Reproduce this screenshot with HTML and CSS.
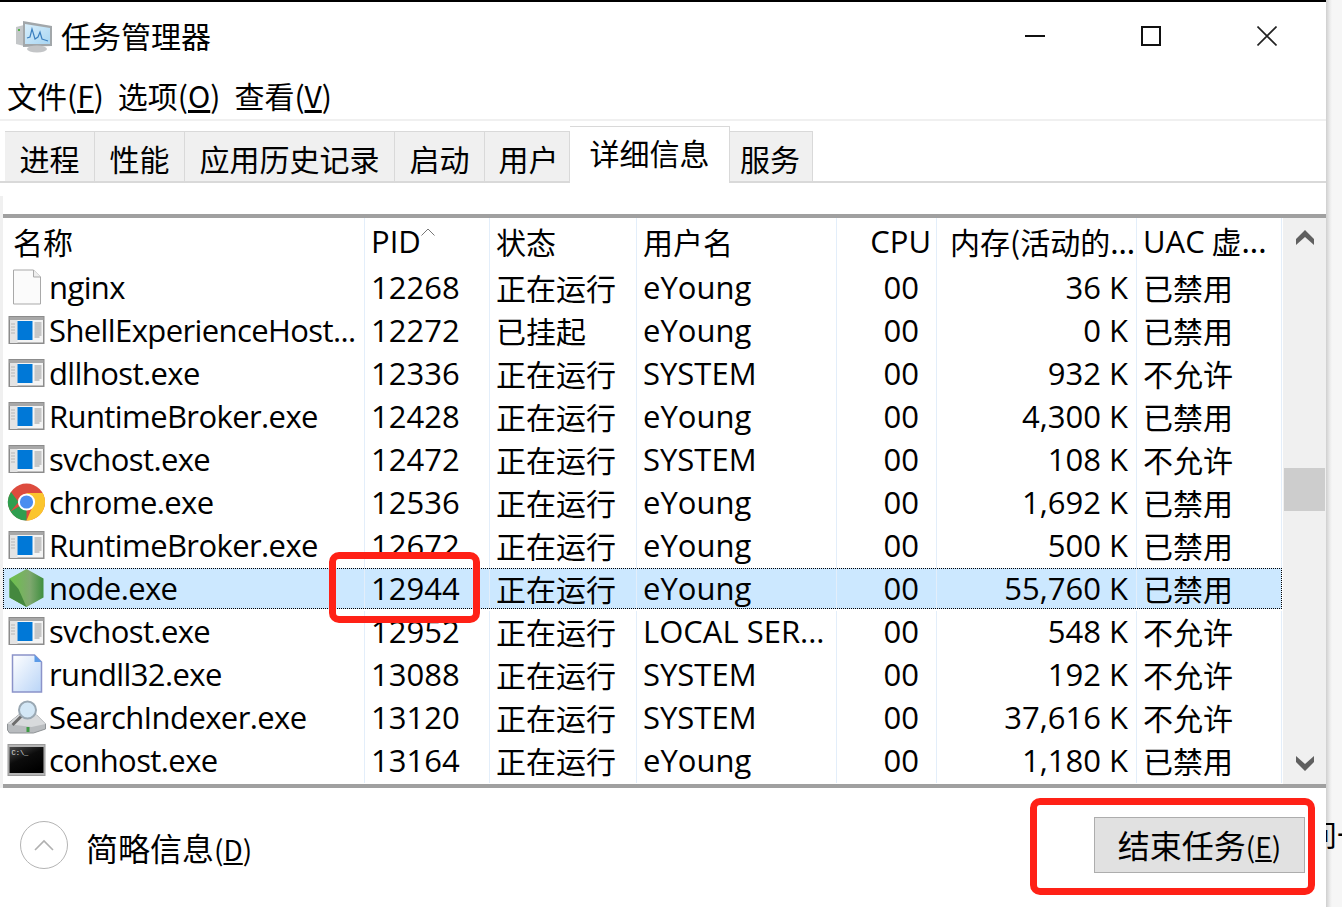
FILE: index.html
```html
<!DOCTYPE html>
<html lang="zh-CN">
<head>
    <meta charset="UTF-8">
    <title>任务管理器</title>
    <link rel="stylesheet" href="styles.css">
</head>
<body>
<svg class="defs" width="0" height="0">
    <symbol id="ico-app" viewBox="0 0 36 28">
        <rect x="0.75" y="0.75" width="34.5" height="26.5" fill="#f4f4f4" stroke="#8c8c8c" stroke-width="1.5"/>
        <rect x="1" y="1" width="34" height="3" fill="#a8a8a8"/>
        <rect x="1.5" y="4" width="7.5" height="23" fill="#e4e4e4"/>
        <path d="M3 8h4M3 11h4M3 14h4M3 17h4" stroke="#888" stroke-width="1" stroke-dasharray="1 1"/>
        <rect x="9" y="5" width="15" height="19" fill="#0078d7"/>
        <path d="M26 7h7M26 9h7M26 11h7M26 13h7M26 15h7M26 17h7M26 19h7M26 21h5" stroke="#999" stroke-width="1"/>
    </symbol>
</svg>

<div class="window">
    <div class="titlebar">
        <svg class="title-icon" width="38" height="34" viewBox="0 0 38 34">
            <defs><linearGradient id="screen-g" x1="0" y1="0" x2="1" y2="1"><stop offset="0" stop-color="#d8eefb"/><stop offset="1" stop-color="#a9d6f2"/></linearGradient></defs>
            <path d="M1 8l8-2v21l-8-2z" fill="#c4c7c9"/>
            <path d="M8 2l29 5v20L8 28z" fill="#a2a7aa"/>
            <path d="M10 5l25 4v16L10 25z" fill="url(#screen-g)"/>
            <path d="M12 19l3-1 2-8 3 10 3-2 2-5 2 7 3 1 3 1" fill="none" stroke="#3b7fbf" stroke-width="1.2"/>
            <ellipse cx="22" cy="30" rx="10" ry="3.5" fill="#c3c5c7"/>
            <rect x="3" y="10" width="2" height="2" fill="#55b04a"/>
        </svg>
        <span class="title-text">任务管理器</span>
        <div class="win-buttons">
            <svg width="20" height="20" viewBox="0 0 20 20"><path d="M0 10h20" stroke="#111" stroke-width="2"/></svg>
            <svg width="20" height="20" viewBox="0 0 20 20"><rect x="1" y="1" width="18" height="18" fill="none" stroke="#111" stroke-width="2"/></svg>
            <svg width="20" height="20" viewBox="0 0 20 20"><path d="M0.5 0.5l19 19M19.5 0.5l-19 19" stroke="#222" stroke-width="1.6"/></svg>
        </div>
    </div>

    <div class="menubar">
        <span>文件(<u>F</u>)</span>
        <span>选项(<u>O</u>)</span>
        <span>查看(<u>V</u>)</span>
    </div>

    <div class="tabs">
        <div class="tab tab-a">进程</div>
        <div class="tab tab-a">性能</div>
        <div class="tab tab-b">应用历史记录</div>
        <div class="tab tab-a">启动</div>
        <div class="tab tab-c">用户</div>
        <div class="tab tab-active">详细信息</div>
        <div class="tab tab-d">服务</div>
    </div>

    <div class="content">
        <div class="list-gap"></div>
        <div class="list">
            <div class="rows">
                <div class="row header">
                    <div class="cell first">名称</div>
                    <div class="cell"><span class="en">PID</span><svg class="sort" width="14" height="8" viewBox="0 0 14 8"><path d="M0.5 7.5L7 1l6.5 6.5" fill="none" stroke="#777" stroke-width="1"/></svg></div>
                    <div class="cell">状态</div>
                    <div class="cell">用户名</div>
                    <div class="cell right en cpu-head">CPU</div>
                    <div class="cell mem-head">内存(活动的...</div>
                    <div class="cell"><span><span class="en">UAC</span> 虚...</span></div>
                </div>

                <div class="row">
                    <div class="cell name">
                        <svg class="ico" width="36" height="36" viewBox="0 0 36 36"><path d="M5 1h20l7 7v27H5z" fill="#fbfbfb" stroke="#a9a9a9"/><path d="M25 1v7h7" fill="#eee" stroke="#a9a9a9"/></svg>
                        <span class="en">nginx</span>
                    </div>
                    <div class="cell en">12268</div><div class="cell">正在运行</div><div class="cell en">eYoung</div><div class="cell en cpu">00</div><div class="cell en right">36 K</div><div class="cell">已禁用</div>
                </div>
                <div class="row">
                    <div class="cell name"><svg class="ico" width="36" height="28"><use href="#ico-app"/></svg><span class="en">ShellExperienceHost...</span></div>
                    <div class="cell en">12272</div><div class="cell">已挂起</div><div class="cell en">eYoung</div><div class="cell en cpu">00</div><div class="cell en right">0 K</div><div class="cell">已禁用</div>
                </div>
                <div class="row">
                    <div class="cell name"><svg class="ico" width="36" height="28"><use href="#ico-app"/></svg><span class="en">dllhost.exe</span></div>
                    <div class="cell en">12336</div><div class="cell">正在运行</div><div class="cell en">SYSTEM</div><div class="cell en cpu">00</div><div class="cell en right">932 K</div><div class="cell">不允许</div>
                </div>
                <div class="row">
                    <div class="cell name"><svg class="ico" width="36" height="28"><use href="#ico-app"/></svg><span class="en">RuntimeBroker.exe</span></div>
                    <div class="cell en">12428</div><div class="cell">正在运行</div><div class="cell en">eYoung</div><div class="cell en cpu">00</div><div class="cell en right">4,300 K</div><div class="cell">已禁用</div>
                </div>
                <div class="row">
                    <div class="cell name"><svg class="ico" width="36" height="28"><use href="#ico-app"/></svg><span class="en">svchost.exe</span></div>
                    <div class="cell en">12472</div><div class="cell">正在运行</div><div class="cell en">SYSTEM</div><div class="cell en cpu">00</div><div class="cell en right">108 K</div><div class="cell">不允许</div>
                </div>
                <div class="row">
                    <div class="cell name">
                        <svg class="ico" width="38" height="38" viewBox="0 0 38 38">
                            <circle cx="19" cy="19" r="18.5" fill="#dd4b3e"/>
                            <path d="M19 19L3 28.5A18.5 18.5 0 0 0 19 37.5z" fill="#2f9e4f"/>
                            <path d="M3 28.5A18.5 18.5 0 0 1 3.5 9L11 19z" fill="#2f9e4f"/>
                            <path d="M19 10h16.2A18.5 18.5 0 0 1 19 37.5L27 19z" fill="#fbc52d"/>
                            <circle cx="19" cy="19" r="8.6" fill="#fff"/>
                            <circle cx="19" cy="19" r="6.6" fill="#4a8df0"/>
                        </svg>
                        <span class="en">chrome.exe</span>
                    </div>
                    <div class="cell en">12536</div><div class="cell">正在运行</div><div class="cell en">eYoung</div><div class="cell en cpu">00</div><div class="cell en right">1,692 K</div><div class="cell">已禁用</div>
                </div>
                <div class="row">
                    <div class="cell name"><svg class="ico" width="36" height="28"><use href="#ico-app"/></svg><span class="en">RuntimeBroker.exe</span></div>
                    <div class="cell en">12672</div><div class="cell">正在运行</div><div class="cell en">eYoung</div><div class="cell en cpu">00</div><div class="cell en right">500 K</div><div class="cell">已禁用</div>
                </div>
                <div class="row selected">
                    <div class="cell name">
                        <svg class="ico" width="36" height="38" viewBox="0 0 36 38">
                            <defs><linearGradient id="node-g" x1="0" x2="1"><stop offset="0" stop-color="#6cc24a"/><stop offset="0.6" stop-color="#7fa86f"/><stop offset="1" stop-color="#3f8f3f"/></linearGradient></defs>
                            <path d="M18 0l17 9.5v19L18 38 1 28.5v-19z" fill="url(#node-g)"/>
                            <path d="M1 28.5v-19L10 20 18 38z" fill="#44883e"/>
                        </svg>
                        <span class="en">node.exe</span>
                    </div>
                    <div class="cell en">12944</div><div class="cell">正在运行</div><div class="cell en">eYoung</div><div class="cell en cpu">00</div><div class="cell en right">55,760 K</div><div class="cell">已禁用</div>
                </div>
                <div class="row">
                    <div class="cell name"><svg class="ico" width="36" height="28"><use href="#ico-app"/></svg><span class="en">svchost.exe</span></div>
                    <div class="cell en">12952</div><div class="cell">正在运行</div><div class="cell en">LOCAL SER...</div><div class="cell en cpu">00</div><div class="cell en right">548 K</div><div class="cell">不允许</div>
                </div>
                <div class="row">
                    <div class="cell name">
                        <svg class="ico" width="36" height="40" viewBox="0 0 36 40">
                            <defs><linearGradient id="doc-g" x1="0" y1="0" x2="1" y2="1"><stop offset="0" stop-color="#ffffff"/><stop offset="1" stop-color="#b9d4f7"/></linearGradient></defs>
                            <path d="M4 1h22l7 7v30H4z" fill="url(#doc-g)" stroke="#8b93c9" stroke-width="1.5"/>
                            <path d="M26 1v7h7z" fill="#5b9be8"/>
                        </svg>
                        <span class="en">rundll32.exe</span>
                    </div>
                    <div class="cell en">13088</div><div class="cell">正在运行</div><div class="cell en">SYSTEM</div><div class="cell en cpu">00</div><div class="cell en right">192 K</div><div class="cell">不允许</div>
                </div>
                <div class="row">
                    <div class="cell name">
                        <svg class="ico" width="40" height="34" viewBox="0 0 40 34">
                            <path d="M1 24L12 15h18l9 9v5l-12 4H3l-2-3z" fill="#b9bcbf" stroke="#8f9396"/>
                            <path d="M1 24l24 3 14-3-9-9H12z" fill="#d8dadc"/>
                            <rect x="20" y="27" width="3" height="5" fill="#3f9a45"/>
                            <path d="M15 16L6 25" stroke="#6d6d6d" stroke-width="3"/>
                            <circle cx="21" cy="10" r="8.5" fill="#d3e7f6" stroke="#9aa8b3" stroke-width="2"/>
                        </svg>
                        <span class="en">SearchIndexer.exe</span>
                    </div>
                    <div class="cell en">13120</div><div class="cell">正在运行</div><div class="cell en">SYSTEM</div><div class="cell en cpu">00</div><div class="cell en right">37,616 K</div><div class="cell">不允许</div>
                </div>
                <div class="row">
                    <div class="cell name">
                        <svg class="ico" width="38" height="32" viewBox="0 0 38 32">
                            <defs><linearGradient id="con-g" x1="0" y1="0" x2="0.6" y2="1"><stop offset="0" stop-color="#4a4a4a"/><stop offset="0.5" stop-color="#0c0c0c"/><stop offset="1" stop-color="#000"/></linearGradient></defs>
                            <rect x="0.5" y="0.5" width="37" height="31" fill="#b5b5b5" stroke="#999"/>
                            <rect x="2" y="3" width="34" height="26" fill="url(#con-g)"/>
                            <text x="4" y="11" class="con-text">C:\_</text>
                        </svg>
                        <span class="en">conhost.exe</span>
                    </div>
                    <div class="cell en">13164</div><div class="cell">正在运行</div><div class="cell en">eYoung</div><div class="cell en cpu">00</div><div class="cell en right">1,180 K</div><div class="cell">已禁用</div>
                </div>
            </div>

            <div class="scrollbar">
                <svg width="20" height="18" viewBox="0 0 20 18"><path d="M1 16V10L10 1l9 9v6l-9-8z" fill="#606060"/></svg>
                <div class="thumb"></div>
                <svg width="20" height="18" viewBox="0 0 20 18"><path d="M1 2v6l9 9 9-9V2l-9 8z" fill="#606060"/></svg>
            </div>
        </div>

        <div class="footer">
            <div class="less">
                <div class="less-btn">
                    <svg width="20" height="12" viewBox="0 0 20 12"><path d="M1 11l9-9 9 9" fill="none" stroke="#b0b0b0" stroke-width="1.6"/></svg>
                </div>
                <span class="less-text">简略信息<small>(<u>D</u>)</small></span>
            </div>
            <div class="end-task">结束任务<small>(<u>E</u>)</small></div>
        </div>
    </div>
</div>

<div class="behind"><div class="behind-text">问一</div></div>

<div class="mark mark-pid"></div>
<div class="mark mark-end"></div>
</body>
</html>
```

FILE: styles.css
```css
* {
    box-sizing: border-box;
}

html, body {
    margin: 0;
    height: 907px;
    overflow: hidden;
}

body {
    display: flex;
    background-color: #fff;
    font-family: "Noto Sans CJK SC", sans-serif;
    font-size: 30px;
    color: #000;
}

.defs {
    position: absolute;
}

.en {
    font-family: "Open Sans", "Noto Sans CJK SC", sans-serif;
    font-size: 31px;
}

.window {
    width: 1326px;
    height: 907px;
    flex: none;
    background-color: #fff;
    border-top: 2px solid #000;
    display: flex;
    flex-direction: column;
}

.behind {
    flex: 1;
    background: linear-gradient(to right, #cfcfcf, #ececec 4px, #f6f6f6 6px);
    overflow: hidden;
    padding-top: 813px;
    white-space: nowrap;
}

.behind-text {
    margin-left: -19px;
    font-size: 30px;
    line-height: 40px;
}

/* title bar */
.titlebar {
    height: 68px;
    display: flex;
    align-items: center;
    padding-left: 15px;
}

.title-text {
    margin: -2px 0 0 8px;
}

.win-buttons {
    margin-left: auto;
    width: 301px;
    padding-right: 49px;
    display: flex;
    justify-content: space-between;
}

/* menu */
.menubar {
    height: 51px;
    padding: 2px 0 0 7px;
    display: flex;
    gap: 14px;
    border-bottom: 2px solid #f0f0f0;
    line-height: 47px;
    white-space: nowrap;
}

/* tabs */
.tabs {
    height: 62px;
    padding: 8px 0 0 5px;
    display: flex;
    align-items: flex-end;
    border-bottom: 2px solid #d9d9d9;
}

.tab {
    height: 50px;
    background-color: #f0f0f0;
    border: 1px solid #d9d9d9;
    border-bottom: none;
    border-left: none;
    line-height: 53px;
    text-align: center;
    white-space: nowrap;
}

.tab-a { width: 90px; }
.tab-b { width: 210px; }
.tab-c { width: 85px; padding-left: 3px; }
.tab-d { width: 83px; padding-right: 2px; }

.tab-active {
    width: 160px;
    height: 57px;
    margin-bottom: -2px;
    background-color: #fff;
    border-top: 1px solid #d9d9d9;
    line-height: 50px;
    position: relative;
}

/* list */
.content {
    flex: 1;
    padding-top: 13px;
    display: flex;
    flex-direction: column;
}

.list-gap {
    height: 18px;
    flex: none;
    border-left: 3px solid #f0f0f0;
}

.list {
    height: 574px;
    flex: none;
    margin-left: 3px;
    box-shadow: -3px 0 0 #f0f0f0;
    border-top: 4px solid #a0a0a0;
    border-bottom: 4px solid #a0a0a0;
    display: flex;
}

.rows {
    width: 1280px;
    flex: none;
}

.row {
    display: grid;
    grid-template-columns: 362px 125px 147px 200px 100px 200px 145px;
    height: 43px;
    width: 1279px;
}

.row.header {
    height: 49px;
}

.cell {
    padding: 0 6px 4px;
    border-right: 1px solid #e3eefa;
    line-height: 36px;
    white-space: nowrap;
    display: flex;
    align-items: center;
}

.cell.first {
    padding-left: 10px;
}

.cell.right {
    justify-content: flex-end;
    padding-right: 8px;
}

.cell.cpu {
    justify-content: flex-end;
    padding-right: 17px;
}

.cell.cpu-head {
    padding-right: 5px;
}

.cell.mem-head {
    padding-left: 13px;
}

.cell.name {
    padding: 0 0 4px;
}

.name .en {
    letter-spacing: -0.6px;
}

.ico {
    width: 46px;
    flex: none;
    padding: 0 0 0 1px;
}

.con-text {
    font-family: "Liberation Mono", monospace;
    font-size: 7px;
    fill: #e0e0e0;
}

.sort {
    margin-top: -18px;
}

.row.selected {
    height: 41px;
    margin-bottom: 2px;
    background-color: #cce8ff;
    outline: 1px dotted #000;
    outline-offset: -1px;
}

.selected .cell {
    padding-bottom: 2px;
}

.scrollbar {
    flex: 1;
    background-color: #f0f0f0;
    display: flex;
    flex-direction: column;
    align-items: center;
    padding: 11px 0 12px;
}

.thumb {
    width: 41px;
    height: 43px;
    background-color: #cdcdcd;
    margin-top: 221px;
    margin-bottom: auto;
}

/* footer */
.footer {
    flex: 1;
    display: flex;
    align-items: center;
    padding: 0 21px 5px 20px;
}

.less {
    display: flex;
    align-items: center;
    gap: 18px;
}

.less-btn {
    width: 48px;
    height: 48px;
    border: 1px solid #b4b4b4;
    border-radius: 50%;
    display: flex;
    align-items: center;
    justify-content: center;
}

.less-text {
    font-size: 32px;
    margin-top: 4px;
}

small {
    font-size: 28px;
}

.end-task {
    margin-left: auto;
    width: 211px;
    height: 56px;
    background-color: #e1e1e1;
    border: 1px solid #adadad;
    line-height: 52px;
    font-size: 32px;
    text-align: center;
    white-space: nowrap;
}

/* red marks drawn over the screenshot */
.mark {
    position: absolute;
    border: 7px solid #ff2116;
    border-radius: 10px;
}

.mark-pid {
    left: 329px;
    top: 552px;
    width: 151px;
    height: 71px;
}

.mark-end {
    left: 1030px;
    top: 798px;
    width: 285px;
    height: 97px;
}
```
